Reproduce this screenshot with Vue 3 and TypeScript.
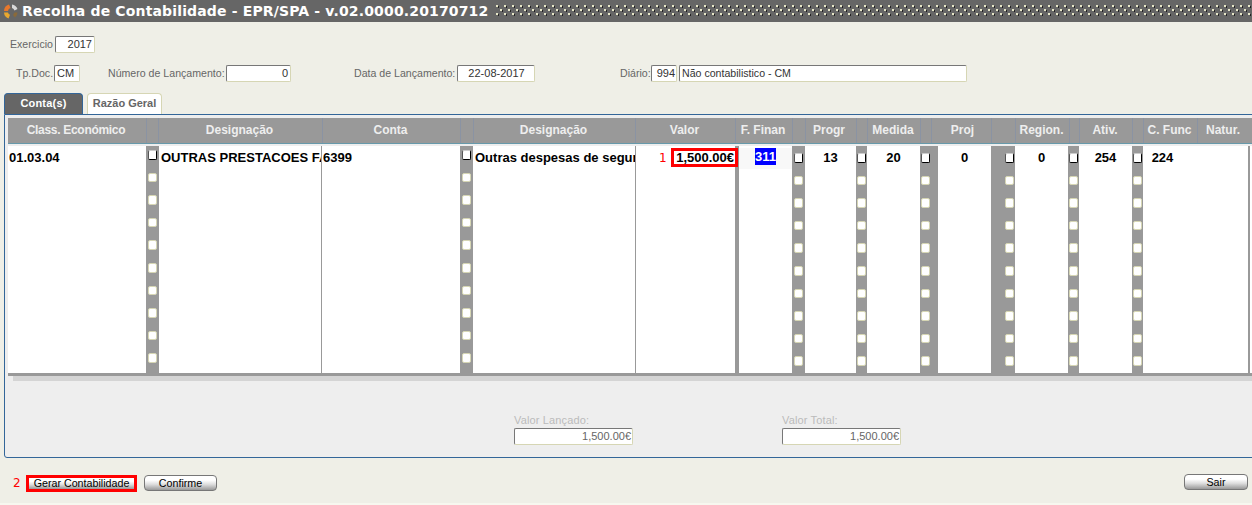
<template>
  <div class="page">
    <header class="title-bar">
      <svg class="logo" width="18" height="18" viewBox="0 0 18 18">
        <path d="M2 9 A7 7 0 0 1 7 2.5 L8.5 6 A3.5 3.5 0 0 0 6 9 Z" fill="#e8782c" />
        <path d="M10 2.5 A7 7 0 0 1 15.5 7 L12.5 8.5 A3.5 3.5 0 0 0 10 6 Z" fill="#d9d9d9" />
        <path d="M2 10.5 L6 10.5 A3.5 3.5 0 0 0 8 12.8 L6.5 16.5 A7 7 0 0 1 2 10.5 Z" fill="#e9a82e" />
        <path d="M15.5 10.5 L12.5 10.5 L11 13 L13 15.5 A7 7 0 0 0 15.5 10.5 Z" fill="#8a6a3a" />
      </svg>
      <span class="title-text">Recolha de Contabilidade - EPR/SPA - v.02.0000.20170712</span>
      <svg class="title-dots" height="12">
        <defs>
          <pattern id="dots" width="8" height="8" patternUnits="userSpaceOnUse">
            <rect x="0" y="0" width="2" height="2" fill="#e8e8c8" />
            <rect x="2" y="1" width="1" height="2" fill="#222" />
            <rect x="4" y="4" width="2" height="2" fill="#e8e8c8" />
            <rect x="6" y="5" width="1" height="2" fill="#222" />
          </pattern>
        </defs>
        <rect width="100%" height="100%" fill="url(#dots)" />
      </svg>
    </header>

    <div class="form-row row-year">
      <span class="label exercicio">Exercicio</span>
      <div class="input right year">2017</div>
    </div>

    <div class="form-row row-doc">
      <span class="label tp">Tp.Doc.</span>
      <div class="input tipo">CM</div>
      <span class="label numero">Número de Lançamento:</span>
      <div class="input right lanc">0</div>
      <span class="label data">Data de Lançamento:</span>
      <div class="input center data-val">22-08-2017</div>
      <span class="label diario">Diário:</span>
      <div class="input right cod">994</div>
      <div class="input diario-val">Não contabilistico - CM</div>
    </div>

    <nav class="tabs">
      <div class="tab active">Conta(s)</div>
      <div class="tab">Razão Geral</div>
    </nav>

    <section class="panel">
      <div class="grid">
        <div class="grid-head">
          <div
            v-for="(h, i) in headers"
            :key="i"
            class="head-cell"
            :class="h.cls"
            :style="{ width: h.w + 'px' }"
          >
            {{ h.label }}
          </div>
        </div>

        <div class="grid-body">
          <template v-for="(c, i) in columns" :key="i">
            <div v-if="c.gutter" class="gutter" :class="c.cls" :style="{ width: c.w + 'px' }">
              <i v-for="n in 10" :key="n" class="check" :class="{ first: n === 1 }"></i>
            </div>
            <div v-else-if="c.cls === 'valor'" class="cell valor" :style="{ width: c.w + 'px' }">
              <span class="mark one">1</span>
              <span class="valor-box">1,500.00€</span>
            </div>
            <div v-else-if="c.cls === 'finan'" class="cell finan" :style="{ width: c.w + 'px' }">
              <div class="finan-row"><span class="selected">311</span></div>
            </div>
            <div v-else class="cell" :class="c.cls" :style="{ width: c.w + 'px' }">
              <span v-if="c.text">{{ c.text }}</span>
            </div>
          </template>
        </div>
      </div>
      <div class="scroll-track"></div>

      <div class="totals">
        <div class="total">
          <span>Valor Lançado:</span>
          <div class="input right total-val">1,500.00€</div>
        </div>
        <div class="total">
          <span>Valor Total:</span>
          <div class="input right total-val">1,500.00€</div>
        </div>
      </div>
    </section>

    <footer class="actions">
      <span class="mark two">2</span>
      <button type="button" class="btn marked">Gerar Contabilidade</button>
      <button type="button" class="btn confirm">Confirme</button>
      <button type="button" class="btn sair">Sair</button>
    </footer>
  </div>
</template>

<script setup lang="ts">
type Header = { label: string; w: number; cls?: string };
type Column = { w: number; gutter?: boolean; text?: string; cls?: string };

const headers: Header[] = [
  { label: "Class. Económico", w: 138, cls: "tight" },
  { label: "", w: 12 },
  { label: "Designação", w: 164 },
  { label: "Conta", w: 138 },
  { label: "", w: 13 },
  { label: "Designação", w: 162 },
  { label: "Valor", w: 100 },
  { label: "F. Finan", w: 57 },
  { label: "", w: 13 },
  { label: "Progr", w: 51, cls: "shift" },
  { label: "", w: 11 },
  { label: "Medida", w: 53 },
  { label: "", w: 11 },
  { label: "Proj", w: 60, cls: "proj" },
  { label: "", w: 24 },
  { label: "Region.", w: 54 },
  { label: "", w: 10 },
  { label: "Ativ.", w: 53 },
  { label: "", w: 11 },
  { label: "C. Func", w: 54 },
  { label: "Natur.", w: 53 },
];

const columns: Column[] = [
  { w: 138, text: "01.03.04", cls: "left" },
  { w: 13, gutter: true, cls: "g-high" },
  { w: 163, text: "OUTRAS PRESTACOES FA", cls: "left line" },
  { w: 138, text: "6399", cls: "left" },
  { w: 13, gutter: true, cls: "g-high" },
  { w: 163, text: "Outras despesas de seguro", cls: "left line" },
  { w: 99, cls: "valor" },
  { w: 4, cls: "divider" },
  { w: 53, cls: "finan" },
  { w: 13, gutter: true },
  { w: 51, text: "13" },
  { w: 11, gutter: true },
  { w: 53, text: "20" },
  { w: 18, gutter: true, cls: "g-left" },
  { w: 53, text: "0" },
  { w: 24, gutter: true, cls: "g-right" },
  { w: 53, text: "0" },
  { w: 11, gutter: true },
  { w: 53, text: "254" },
  { w: 11, gutter: true },
  { w: 107, text: "224", cls: "func" },
];
</script>

<style>
html,
body {
  margin: 0;
  overflow: hidden;
  background: #efefe7;
}
</style>

<style scoped>
.page {
  box-sizing: border-box;
  width: 1252px;
  height: 505px;
  overflow: hidden;
  background: #efefe7;
  border-bottom: 2px solid #f7f7ef;
  font-family: "Liberation Sans", Arial, sans-serif;
  font-size: 11px;
  color: #000;
}

.title-bar {
  display: flex;
  align-items: center;
  height: 22px;
  background: #666;
}

.logo {
  margin-left: 2px;
  flex: none;
}

.title-text {
  margin-left: 2px;
  color: #fff;
  font-family: "DejaVu Sans", Verdana, sans-serif;
  font-size: 14px;
  font-weight: 700;
  letter-spacing: 0.15px;
  white-space: nowrap;
}

.title-dots {
  flex: 1;
  min-width: 0;
  margin-left: 8px;
}

.form-row {
  display: flex;
  align-items: center;
  height: 18px;
}

.row-year {
  margin-top: 13px;
  padding-left: 10px;
}

.row-doc {
  margin-top: 11px;
  padding-left: 16px;
}

.label {
  flex: none;
  color: #666;
  font-size: 10.6px;
  white-space: nowrap;
}

.exercicio {
  width: 45px;
}

.tp {
  width: 38px;
}

.input {
  flex: none;
  box-sizing: border-box;
  height: 17px;
  line-height: 15px;
  padding: 0 1px 0 2px;
  background: #fff;
  border: 1px solid #d6d6b4;
  border-top-color: #777;
  border-left-color: #777;
  border-radius: 2px;
  color: #333;
  white-space: nowrap;
  overflow: hidden;
}

.right {
  text-align: right;
}

.center {
  text-align: center;
}

.year {
  width: 40px;
  padding-right: 2px;
}

.tipo {
  width: 26px;
}

.numero {
  width: 118px;
  margin-left: 28px;
}

.lanc {
  width: 65px;
  padding-right: 2px;
}

.data {
  width: 103px;
  margin-left: 63px;
}

.data-val {
  width: 78px;
}

.diario {
  width: 31px;
  margin-left: 85px;
}

.cod {
  width: 26px;
}

.diario-val {
  width: 288px;
  margin-left: 2px;
  font-size: 10.6px;
}

.tabs {
  display: flex;
  gap: 4px;
  height: 21px;
  margin-top: 11px;
  padding-left: 4px;
}

.tab {
  box-sizing: border-box;
  width: 75px;
  height: 21px;
  padding-top: 3px;
  background: #fff;
  border: 1px solid #d6d6b4;
  border-bottom: 0;
  border-radius: 4px 4px 0 0;
  color: #666;
  font-weight: 700;
  text-align: center;
}

.tab.active {
  width: 79px;
  background: #666;
  border-color: #369;
  color: #fff;
  letter-spacing: 0.2px;
}

.panel {
  box-sizing: border-box;
  width: 1260px;
  height: 344px;
  margin-left: 4px;
  padding: 3px 0 0 3px;
  background: #eee;
  border: 1px solid #369;
  border-radius: 0 3px 3px 3px;
}

.grid {
  width: 1260px;
}

.grid-head {
  display: flex;
  height: 25px;
  margin-bottom: 2px;
  background: #999;
  border-bottom: 1px solid #69a;
}

.head-cell {
  box-sizing: border-box;
  flex: none;
  padding-right: 2px;
  border-left: 1px solid #8a93a3;
  color: #eee;
  font-size: 12px;
  font-weight: 700;
  line-height: 25px;
  text-align: center;
  white-space: nowrap;
}

.head-cell:first-child {
  border-left: 0;
}

.head-cell.tight {
  letter-spacing: -0.3px;
}

.head-cell.shift {
  padding-right: 4px;
}

.head-cell.proj {
  padding-right: 0;
  padding-left: 2px;
}

.grid-body {
  display: flex;
  height: 227px;
  background: #fff;
  border-bottom: 3px solid #999;
}

.cell {
  box-sizing: border-box;
  flex: none;
  overflow: hidden;
  padding-top: 4px;
  background: #fff;
  color: #000;
  font-size: 13px;
  font-weight: 700;
  line-height: 15px;
  text-align: center;
  white-space: nowrap;
}

.cell.left {
  padding-left: 1px;
  text-align: left;
}

.cell.line {
  padding-left: 2px;
  border-right: 1px solid #999;
}

.cell.func {
  padding-right: 66px;
  border-right: 2px solid #999;
}

.cell.divider {
  background: #999;
}

.cell.valor {
  display: flex;
  align-items: flex-start;
  justify-content: flex-end;
  gap: 4px;
  overflow: visible;
  padding-top: 2px;
}

.valor-box {
  position: relative;
  z-index: 1;
  box-sizing: border-box;
  flex: none;
  width: 67px;
  height: 19px;
  margin-right: -3px;
  padding-right: 1px;
  border: 3px solid #f00;
  background: #fff;
  line-height: 13px;
  text-align: right;
}

.cell.finan {
  padding-top: 2px;
}

.finan-row {
  height: 21px;
  background: #f8f8f8;
  text-align: center;
}

.selected {
  display: inline-block;
  background: #00f;
  color: #fff;
  line-height: 17px;
}

.mark {
  color: #f00;
  font-family: "DejaVu Sans", sans-serif;
  font-size: 12px;
  font-weight: 400;
}

.one {
  flex: none;
  width: 8px;
  padding-top: 3px;
  text-align: left;
}

.two {
  width: 13px;
}

.gutter {
  box-sizing: border-box;
  display: flex;
  flex: none;
  flex-direction: column;
  align-items: center;
  gap: 13px;
  padding-top: 7px;
  background: #999;
}

.g-high {
  padding-top: 4px;
}

.g-left {
  align-items: flex-start;
  padding-left: 1px;
}

.g-right {
  align-items: flex-end;
  padding-right: 1px;
}

.check {
  display: block;
  flex: none;
  box-sizing: border-box;
  width: 9px;
  height: 9.6px;
  background: #fff;
  border: 1px solid #d6d6b4;
  border-radius: 2px;
}

.check.first {
  border-color: #ccc #000 #000 #555;
}

.scroll-track {
  width: 1260px;
  height: 5px;
  margin-left: 5px;
  background: #d4d4d4;
}

.totals {
  display: flex;
  margin-top: 33px;
  padding-left: 506px;
  color: #bbb;
}

.total {
  width: 268px;
  line-height: 13px;
}

.total span {
  display: block;
  letter-spacing: 0.15px;
}

.total-val {
  width: 119px;
  margin-top: 1px;
  color: #666;
}

.actions {
  display: flex;
  align-items: center;
  height: 18px;
  margin-top: 16px;
  padding-left: 13px;
}

.btn {
  box-sizing: border-box;
  height: 16px;
  padding: 0;
  background: linear-gradient(#fff 30%, #ddd 60%, #999);
  border: 1px solid #777;
  border-radius: 4px;
  color: #000;
  font-family: "Liberation Sans", Arial, sans-serif;
  font-size: 10.7px;
  line-height: 14px;
}

.btn.marked {
  width: 111px;
  height: 17px;
  border: 3px solid #f00;
  border-radius: 0;
  line-height: 11px;
}

.btn.confirm {
  width: 73px;
  margin-left: 7px;
}

.btn.sair {
  width: 64px;
  margin-left: auto;
  margin-right: 4px;
  margin-bottom: 2px;
}
</style>
